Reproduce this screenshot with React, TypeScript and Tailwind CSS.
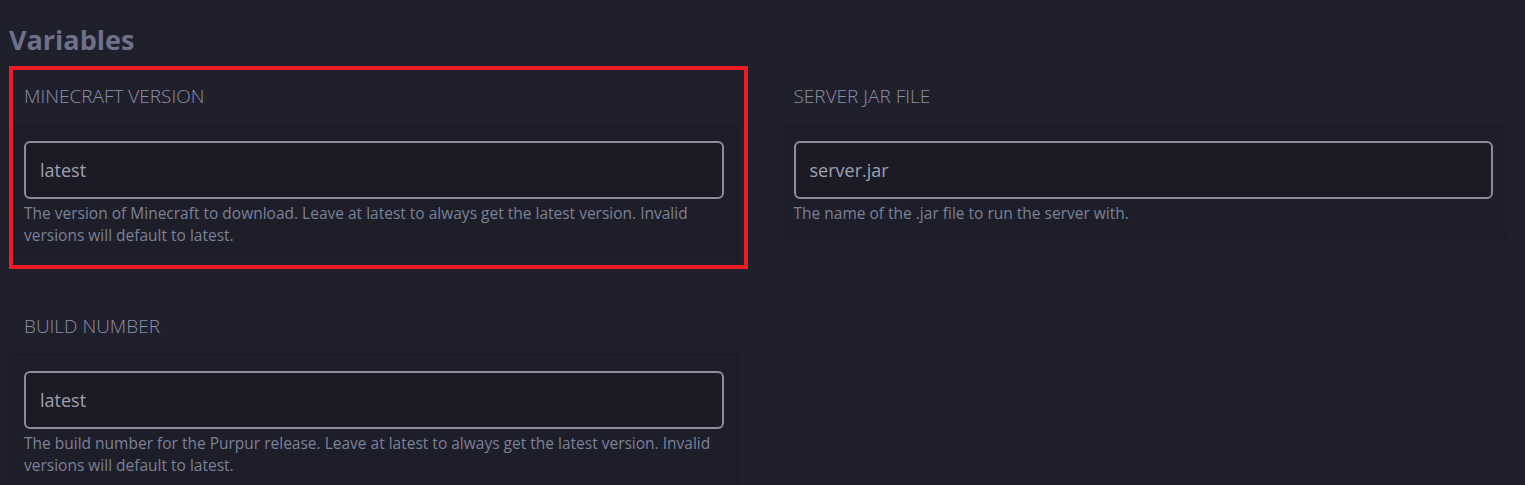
import React from 'react';

interface Variable {
  name: string;
  value: string;
  description: string;
  highlighted?: boolean;
}

const VARIABLES: Variable[] = [
  {
    name: 'Minecraft Version',
    value: 'latest',
    description:
      'The version of Minecraft to download. Leave at latest to always get the latest version. Invalid versions will default to latest.',
    highlighted: true,
  },
  {
    name: 'Server Jar File',
    value: 'server.jar',
    description: 'The name of the .jar file to run the server with.',
  },
  {
    name: 'Build Number',
    value: 'latest',
    description:
      'The build number for the Purpur release. Leave at latest to always get the latest version. Invalid versions will default to latest.',
  },
];

function VariableCard({ variable }: { variable: Variable }) {
  return (
    <div className="relative self-start rounded bg-[#1e1e2a] shadow-[0_1px_3px_rgba(0,0,0,0.15)]">
      {/* Header */}
      <div className="border-b border-[#191a23] bg-[#201f2c] px-[15px] pb-[16px] pt-[17px] text-[19px] font-light uppercase leading-6 text-[#8b90a8]">
        {variable.name}
      </div>

      {/* Body */}
      <div className="px-[15px] pb-[14px] pt-[16px]">
        <input
          readOnly
          value={variable.value}
          className="h-[58px] w-full rounded-md border-2 border-[#8d8c9b] bg-[#1c1a25] px-[14px] text-[18px] text-[#9ea1b2] outline-none"
        />
        <p className="mt-[3px] text-[15.5px] leading-[22px] text-[#7b8196]">{variable.description}</p>
      </div>

      {/* Highlight annotation */}
      {variable.highlighted && (
        <div className="pointer-events-none absolute -top-px left-0 -right-[9px] -bottom-[9px] border-4 border-[#ec1c24]" />
      )}
    </div>
  );
}

export default function App() {
  return (
    <div className="min-h-[485px] bg-[#201f2c] pl-[9px] pr-[17px] pt-[24px] font-['Open_Sans',sans-serif]">
      <h2 className="mb-[11px] text-[27px] font-bold leading-8 text-[#6e7189]">Variables</h2>
      <div className="grid grid-cols-2 gap-x-[40px] gap-y-[37px]">
        {VARIABLES.map((v) => (
          <VariableCard key={v.name} variable={v} />
        ))}
      </div>
    </div>
  );
}
